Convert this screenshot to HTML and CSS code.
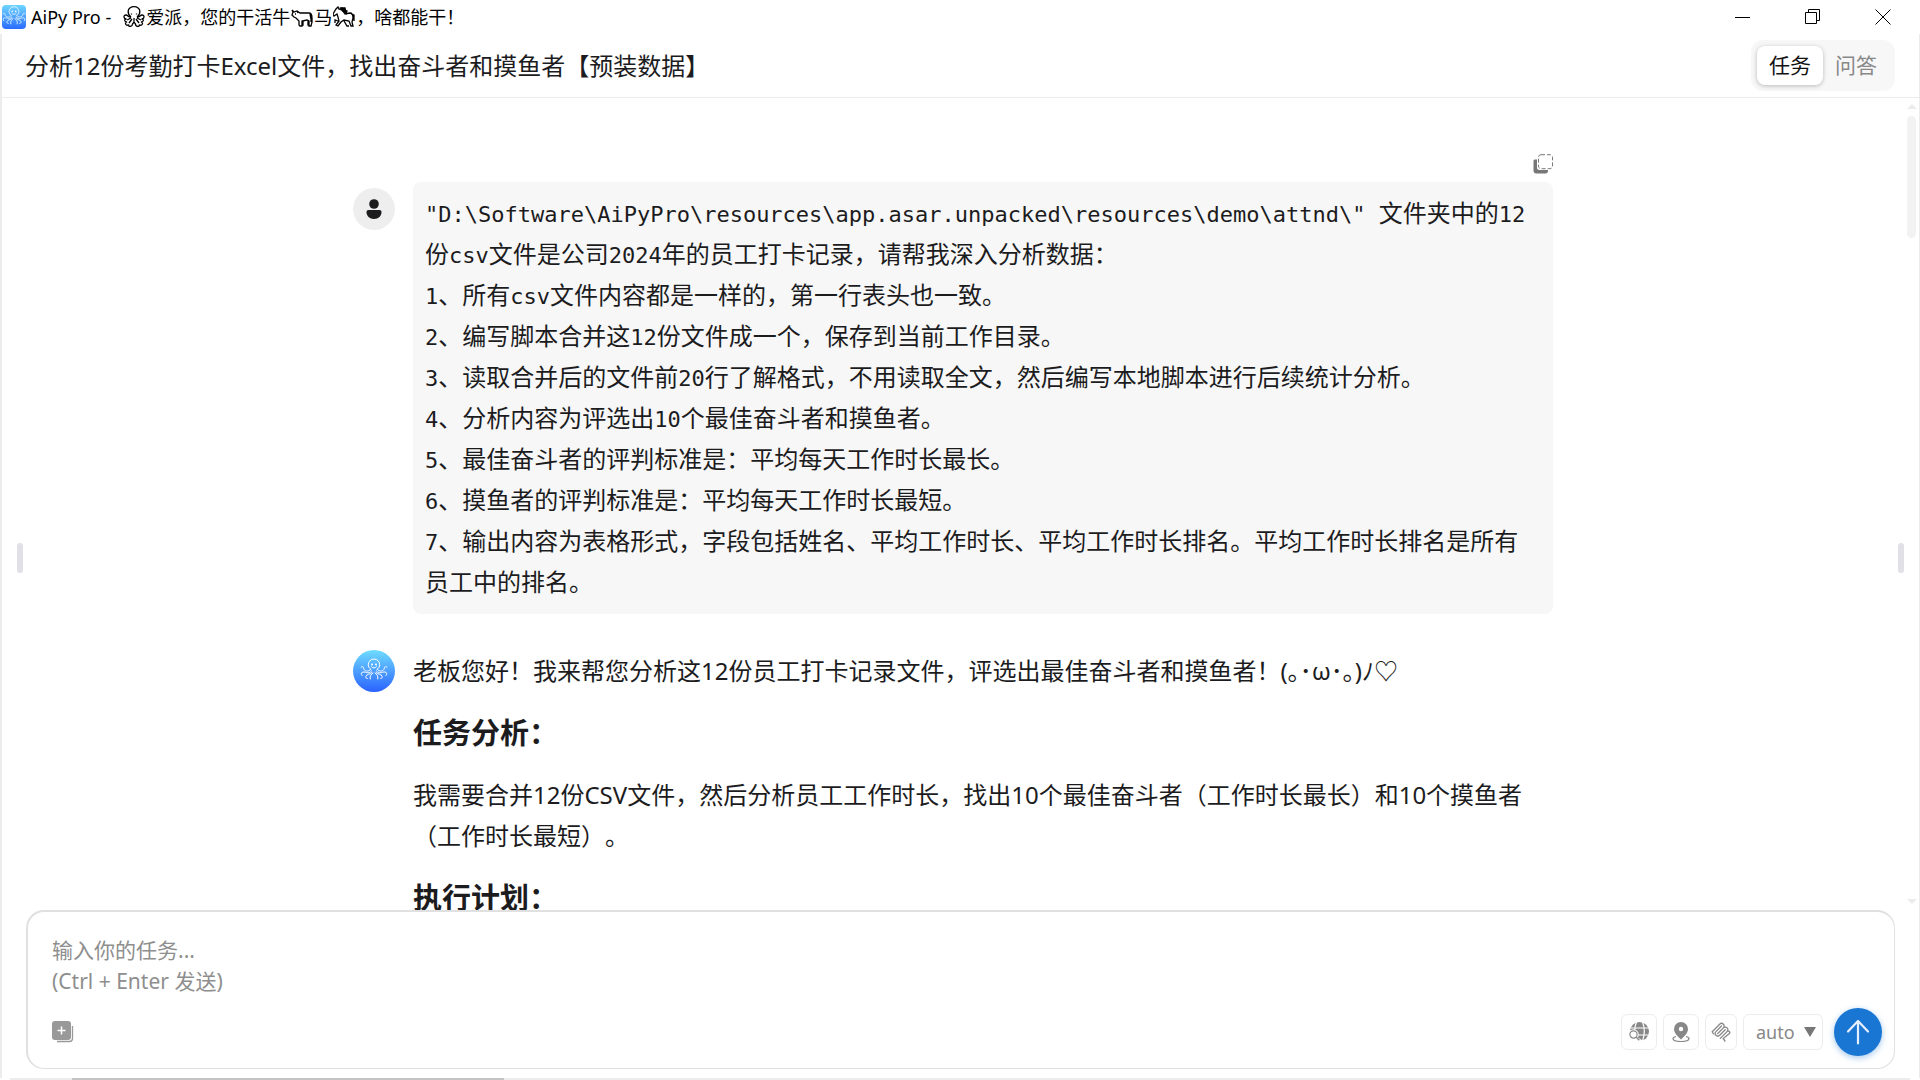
FILE: index.html
```
<!DOCTYPE html>
<html lang="zh-CN">
<head>
    <meta charset="UTF-8">
    <meta name="viewport" content="width=device-width, initial-scale=1.0">
    <title>AiPy Pro</title>
    <link rel="stylesheet" href="styles.css">
</head>
<body>
    <!-- shared drawing of the octopus, used in the title bar and the avatar -->
    <svg class="sprite" aria-hidden="true">
        <symbol id="octopus" viewBox="0 0 42 42">
            <g fill="none" stroke="currentColor" stroke-linecap="round" stroke-linejoin="round">
                <path d="M18 19.5c-2-1.500-2.700-3-2.700-4.800a5.700 5.700 0 0 1 11.400 0c0 1.800-.7 3.300-2.700 4.800"/>
                <path d="M17.500 19.500c-1.800 2.600-6.500 1.800-6.800-1.200-.1-1.700-1.700-2.300-2.700-1M24.500 19.500c1.800 2.600 6.500 1.800 6.800-1.200.1-1.700 1.700-2.300 2.700-1"/>
                <path d="M18.500 21c-3 3.500-5.500.6-8.500 1-2 .3-2.300 2.500-1 3.500M23.500 21c3 3.500 5.500.6 8.500 1 2 .3 2.300 2.500 1 3.500"/>
                <path d="M19 22.500c-1.500 2-5.500 1.200-6.200 4-.3 1.300.5 2 1.500 2M23 22.500c1.500 2 5.500 1.200 6.200 4 .3 1.300-.5 2-1.500 2"/>
                <path d="M20 23c-1.800 1.500-3.500 2.500-2.800 6M22 23c1.800 1.500 3.500 2.500 2.800 6M18.500 16.800c1.500 1.600 3.500 1.600 5 0"/>
            </g>
            <circle cx="19" cy="14.500" r="1" fill="currentColor"/>
            <circle cx="23" cy="14.500" r="1" fill="currentColor"/>
        </symbol>
    </svg>

    <header class="titlebar">
        <span class="app-icon"><svg viewBox="0 0 24 24"><use href="#octopus" x="-6" y="-6" width="36" height="36"/></svg></span>
        <h1 class="titlebar-text">
            <span>AiPy Pro -</span>
            <svg class="emoji" viewBox="0 0 22 22" aria-hidden="true">
                <path d="M8 11C5.500 9 5 7 5.200 5a5.800 4.300 0 0 1 11.600 0c.2 2-.3 4-2.800 6M8 11c-2 1-3-2-5-2-3 0-2.500 4 .5 4C1 13 1 16 4 16c-3 1-1 4 1.500 3 0 2 4 2 4-1l1.500-2 1.500 2c0 3 4 3 4 1 2.500 1 4.500-2 1.500-3 3 0 3-3 .5-3 3 0 3.500-4 .5-4-2 0-3 3-5 2M8 12l-4 2M9 13l-3 4M14 12l4 2M13 13l3 4M11 12v4M8.500 7.500v1M13.500 7.500v1"/>
            </svg>
            <span>爱派，您的干活牛</span>
            <svg class="emoji" viewBox="0 0 22 22" aria-hidden="true">
                <path d="M1 4l2 2 3-1 3 2h9c2 0 3 2 3 5v4l-1 4h-2v-5l-2-1-5 1v5H9l-1-1v-4l-3-3-2-1-2-2 1-3zM19 8l1 5v3M12 15v4h-1M6 5l1 2M4 8h1M17 15v4h1"/>
            </svg>
            <span>马</span>
            <svg class="emoji" viewBox="0 0 22 22" aria-hidden="true">
                <path d="M5 1l1 2c3 0 4 2 6 5l5-1c2 0 3 2 3 5l-1 4 1 4h-2l-2-5-5-1-3 2-3 4-2-1 3-4-1-4-1-3-3 2-1-2 3-5zM12 8L9 2 7 3M10 4l4 1-1 3M18 8l3 1v6M5 15l-3-1v3M11 15l3 5h2"/>
                <path d="M8 2l5 5-1-5z" fill="currentColor"/>
            </svg>
            <span>，啥都能干！</span>
        </h1>
        <div class="window-buttons">
            <button type="button" aria-label="最小化"><svg viewBox="0 0 16 16"><path d="M0 8.500h15"/></svg></button>
            <button type="button" aria-label="还原"><svg viewBox="0 0 16 16"><path d="M.5 3.500h11v11H.5zM3.500 3V.5h11v11H12"/></svg></button>
            <button type="button" aria-label="关闭"><svg viewBox="0 0 16 16"><path d="M.5.5l15 15M15.500.5l-15 15"/></svg></button>
        </div>
    </header>

    <main class="app">
        <div class="topbar">
            <h2 class="topbar-title">分析12份考勤打卡Excel文件，找出奋斗者和摸鱼者【预装数据】</h2>
            <nav class="tabs">
                <button type="button" class="tab active">任务</button>
                <button type="button" class="tab">问答</button>
            </nav>
        </div>

        <div class="chat">
            <div class="messages">
                <div class="message-tools">
                    <button type="button" class="copy" aria-label="复制">
                        <svg viewBox="0 0 20 20"><path d="M.5 7c0-1 .8-1.500 1.500-1.500h2v8c0 1.500.8 2.500 2.500 2.500H15v1c0 1.500-1 2.500-2.500 2.500h-9C1.500 19.500.5 18.500.5 16.500z" fill="#777"/><rect x="5.500" y=".7" width="14" height="14" rx="2.500" fill="none" stroke="#777" stroke-dasharray="4 2"/></svg>
                    </button>
                </div>
                <section class="message">
                    <span class="avatar user"><svg viewBox="0 0 42 42"><circle cx="21" cy="16" r="4.800"/><path d="M15.500 22h11c1.200 0 2 .8 2 2 0 4-3 7-7.500 7s-7.500-3-7.500-7c0-1.200.8-2 2-2z"/></svg></span>
                    <div class="bubble">
                        <p><code>"D:\Software\AiPyPro\resources\app.asar.unpacked\resources\demo\attnd\" </code>文件夹中的<code>12</code>份<code>csv</code>文件是公司<code>2024</code>年的员工打卡记录，请帮我深入分析数据：</p>
                        <p><code>1</code>、所有<code>csv</code>文件内容都是一样的，第一行表头也一致。</p>
                        <p><code>2</code>、编写脚本合并这<code>12</code>份文件成一个，保存到当前工作目录。</p>
                        <p><code>3</code>、读取合并后的文件前<code>20</code>行了解格式，不用读取全文，然后编写本地脚本进行后续统计分析。</p>
                        <p><code>4</code>、分析内容为评选出<code>10</code>个最佳奋斗者和摸鱼者。</p>
                        <p><code>5</code>、最佳奋斗者的评判标准是：平均每天工作时长最长。</p>
                        <p><code>6</code>、摸鱼者的评判标准是：平均每天工作时长最短。</p>
                        <p><code>7</code>、输出内容为表格形式，字段包括姓名、平均工作时长、平均工作时长排名。平均工作时长排名是所有员工中的排名。</p>
                    </div>
                </section>
                <section class="message">
                    <span class="avatar bot"><svg viewBox="0 0 42 42"><use href="#octopus"/></svg></span>
                    <div class="answer">
                        <p>老板您好！我来帮您分析这12份员工打卡记录文件，评选出最佳奋斗者和摸鱼者！(｡･ω･｡)ﾉ♡</p>
                        <h3>任务分析：</h3>
                        <p>我需要合并12份CSV文件，然后分析员工工作时长，找出10个最佳奋斗者（工作时长最长）和10个摸鱼者（工作时长最短）。</p>
                        <h3>执行计划：</h3>
                    </div>
                </section>
            </div>
            <div class="scrollbar">
                <svg viewBox="0 0 10 5"><path d="M0 5l5-5 5 5z"/></svg>
                <div class="thumb"></div>
                <svg viewBox="0 0 10 5"><path d="M0 0h10L5 5z"/></svg>
            </div>
        </div>

        <form class="composer">
            <textarea rows="2" aria-label="输入你的任务" placeholder="输入你的任务...&#10;(Ctrl + Enter 发送)"></textarea>
            <div class="composer-bar">
                <button type="button" class="attach" aria-label="添加附件">
                    <svg viewBox="0 0 22 22"><rect x="0" y="0" width="19" height="19" rx="3" fill="#999"/><path d="M9.500 5.500v8M5.500 9.500h8" stroke="#fff" stroke-width="1.500"/><path d="M20.500 5v12.500a3 3 0 0 1-3 3H5" fill="none" stroke="#999" stroke-width="1.300"/></svg>
                </button>
                <button type="button" class="tool" aria-label="联网搜索">
                    <svg viewBox="0 0 20 20"><circle cx="10.500" cy="9.500" r="9.500" fill="#888"/><path d="M0 6h20M8 13h12M7.500 0c-2.500 6-2.500 12 0 19M13.500 0c2.500 6 2.500 12 0 19" fill="none" stroke="#fff" stroke-width="1.200"/><circle cx="4.500" cy="12.500" r="5.200" fill="#fff"/><path d="M6 16l6 4" stroke="#fff" stroke-width="4"/><circle cx="4.500" cy="12.500" r="3.600" fill="none" stroke="#888" stroke-width="1.200"/><path d="M7.300 15.300l3 3" stroke="#888" stroke-width="1.500"/></svg>
                </button>
                <button type="button" class="tool" aria-label="位置">
                    <svg viewBox="0 0 20 20"><path d="M10 0a7 7 0 0 1 7 7c0 4-3.500 7-7 10.500C6.500 14 3 11 3 7a7 7 0 0 1 7-7z" fill="#888"/><circle cx="10" cy="7" r="2.200" fill="#fff"/><path d="M5 14.500c-2 .5-3 1.200-3 2 0 1.700 3.600 3 8 3s8-1.300 8-3c0-.8-1-1.500-3-2" fill="none" stroke="#888" stroke-width="1.200"/></svg>
                </button>
                <button type="button" class="tool narrow" aria-label="MCP">
                    <svg viewBox="0 0 20 20"><path d="M1.200 9.700L8.700 2.200a2.600 2.600 0 0 1 3.700 3.700L6.700 11.600M6.800 11.500l5.600-5.600a2.600 2.600 0 0 1 3.700 0 2.600 2.600 0 0 1 0 3.700l-6.800 6.800M10.500 4L5 9.600a2.600 2.600 0 0 0 3.700 3.700l5.500-5.500M16.100 9.600c1.500-1.500 3.500.5 2.300 2l-6.200 5 1.800 2.400M1.200 9.700l1.300 2.300" fill="none" stroke="#888" stroke-width="1.300" stroke-linecap="round"/></svg>
                </button>
                <span class="model">
                    <select aria-label="模型"><option>auto</option></select>
                    <svg viewBox="0 0 12 10"><path d="M0 0h12L6 10z"/></svg>
                </span>
                <button type="submit" class="send" aria-label="发送">
                    <svg viewBox="0 0 48 48"><path d="M24 35.500V13M14 23.500L24 13l10 10.500"/></svg>
                </button>
            </div>
        </form>

        <div class="handle handle-left"></div>
        <div class="handle handle-right"></div>
    </main>

    <footer class="bottom-scroll">
        <div class="bottom-thumb"></div>
    </footer>
</body>
</html>
```
FILE: styles.css
```
* {
    box-sizing: border-box;
    margin: 0;
}
body {
    display: flex;
    flex-direction: column;
    height: 100vh;
    overflow: hidden;
    background-color: #fff;
    color: #1c1c1e;
    font-family: "Noto Sans", "Noto Sans CJK SC", "DejaVu Sans", sans-serif;
    font-size: 24px;
    line-height: 41px;
    text-spacing-trim: space-all;
}
button, select, textarea {
    padding: 0;
    border: none;
    background: none;
    color: inherit;
    font: inherit;
}
svg {
    display: block;
}
.sprite {
    position: absolute;
    width: 0;
    height: 0;
}

/* title bar */
.titlebar {
    display: flex;
    align-items: center;
    height: 34px;
    flex-shrink: 0;
    padding: 0 2px;
    color: #000;
}
.app-icon {
    width: 24px;
    height: 24px;
    border-radius: 4px;
    background: linear-gradient(#6fd6ff, #2a6cff);
    color: #e4f3ff;
}
.titlebar-text {
    display: flex;
    align-items: center;
    flex: 1;
    padding-left: 5px;
    font-size: 18px;
    font-weight: normal;
    line-height: 24px;
}
.emoji {
    width: 22px;
    height: 22px;
    margin: 0 1px;
    fill: none;
    stroke: currentColor;
    stroke-width: 1.3;
}
.titlebar-text span:first-child {
    margin-right: 11px;
}
.window-buttons {
    display: flex;
}
.window-buttons button {
    display: flex;
    align-items: center;
    justify-content: center;
    width: 70px;
    height: 34px;
}
.window-buttons svg {
    width: 16px;
    height: 16px;
    fill: none;
    stroke: #000;
}

/* app frame */
.app {
    position: relative;
    display: flex;
    flex-direction: column;
    flex: 1;
    min-height: 0;
    padding-bottom: 9px;
    border-left: 2px solid #ececec;
    border-right: 1px solid #ececec;
}
.topbar {
    display: flex;
    align-items: center;
    justify-content: space-between;
    height: 64px;
    flex-shrink: 0;
    padding: 0 24px 0 23px;
    border-bottom: 1px solid #ececec;
}
.topbar-title {
    font-size: 24px;
    font-weight: normal;
}
.tabs {
    display: flex;
    padding: 6px;
    border-radius: 12px;
    background-color: #f7f7f7;
}
.tab {
    width: 66px;
    height: 39px;
    border-radius: 8px;
    color: #888;
    font-size: 21px;
    line-height: 39px;
}
.tab.active {
    background-color: #fff;
    box-shadow: 0 1px 4px rgba(0, 0, 0, 0.25);
    color: #111;
}

/* messages */
.chat {
    display: flex;
    flex: 1;
    min-height: 0;
}
.messages {
    flex: 1;
    overflow: hidden;
    padding: 56px 24px 0;
}
.message-tools, .message {
    max-width: 1200px;
    margin: 0 auto;
}
.message-tools {
    display: flex;
    justify-content: flex-end;
    margin-bottom: 8px;
}
.copy, .copy svg {
    width: 20px;
    height: 20px;
}
.message {
    display: flex;
    align-items: flex-start;
    gap: 18px;
    margin-bottom: 36px;
}
.avatar {
    flex-shrink: 0;
    width: 42px;
    height: 42px;
    border-radius: 50%;
}
.avatar.user {
    margin-top: 6px;
    background-color: #eee;
    fill: #1c1c1e;
}
.avatar.bot {
    background: linear-gradient(#6fdcff, #2a62ff);
    color: #fff;
}
.bubble {
    flex: 1;
    padding: 10px 12px 12px;
    border-radius: 8px;
    background-color: #f7f7f7;
}
code {
    font-family: "DejaVu Sans Mono", monospace;
    font-size: 22px;
    line-height: 24px;
}
.answer {
    display: flex;
    flex-direction: column;
    flex: 1;
    gap: 21px;
}
.answer h3 {
    font-size: 29px;
    line-height: 41px;
}

.scrollbar {
    display: flex;
    flex-direction: column;
    align-items: center;
    width: 15px;
    padding: 6px 0;
}
.scrollbar svg {
    width: 10px;
    height: 5px;
    fill: #ececec;
}
.thumb {
    width: 9px;
    height: 122px;
    margin: 7px 0 auto;
    border-radius: 5px;
    background-color: #f2f2f2;
}

/* input box */
.composer {
    margin: 0 24px;
    padding: 23px 12px 12px 24px;
    border: 2px solid #e0e0e0;
    border-right-width: 1px;
    border-bottom-width: 1px;
    border-radius: 18px;
}
.composer textarea {
    display: block;
    width: 100%;
    height: 62px;
    resize: none;
    outline: none;
    font-size: 21px;
    line-height: 31px;
}
.composer textarea::placeholder {
    color: #8e8e8e;
}
.composer-bar {
    display: flex;
    align-items: center;
    gap: 6px;
    margin-top: 11px;
}
.attach {
    margin-right: auto;
}
.attach svg {
    width: 22px;
    height: 22px;
}
.tool {
    display: flex;
    align-items: center;
    justify-content: center;
    width: 36px;
    height: 36px;
    border: 1px solid #ececec;
    border-radius: 6px;
}
.tool svg {
    width: 20px;
    height: 20px;
}
.tool.narrow {
    width: 32px;
}
.model {
    display: grid;
    align-items: center;
    width: 80px;
    height: 36px;
    border: 1px solid #ececec;
    border-radius: 6px;
    color: #888;
}
.model select, .model svg {
    grid-area: 1 / 1;
}
.model select {
    appearance: none;
    height: 34px;
    padding-left: 12px;
    font-size: 18px;
    line-height: 34px;
}
.model svg {
    justify-self: end;
    width: 12px;
    height: 10px;
    margin-right: 6px;
    fill: #777;
    pointer-events: none;
}
.send {
    width: 48px;
    height: 48px;
    margin-left: 5px;
    border-radius: 50%;
    background-color: #1976d2;
    box-shadow: 0 2px 6px rgba(25, 118, 210, 0.4);
}
.send svg {
    fill: none;
    stroke: #e6efff;
    stroke-width: 2.2;
    stroke-linecap: round;
    stroke-linejoin: round;
}

/* resize handles over the sides */
.handle {
    position: absolute;
    top: 509px;
    width: 6px;
    height: 30px;
    border-radius: 3px;
    background-color: #e0e0e6;
}
.handle-left {
    left: 15px;
}
.handle-right {
    right: 15px;
}

.bottom-scroll {
    height: 2px;
    flex-shrink: 0;
    padding-left: 62px;
    margin: 0 10px;
    background-color: #ececec;
}
.bottom-thumb {
    width: 432px;
    height: 2px;
    background-color: #c4c4c4;
}
```
